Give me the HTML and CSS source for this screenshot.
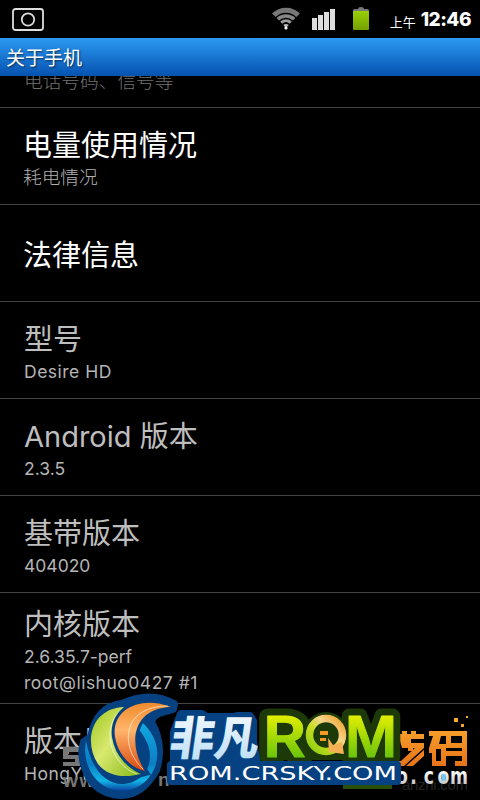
FILE: index.html
```html
<!DOCTYPE html>
<html lang="zh-CN">

<head>
    <meta charset="utf-8">
    <meta name="viewport" content="width=device-width, initial-scale=1">
    <title>关于手机</title>
    <link rel="stylesheet" href="styles.css">
</head>

<body>
    <div class="phone">
        <div class="statusbar">
            <svg class="camera" width="32" height="24" viewBox="0 0 32 24">
                <rect x="1" y="1" width="30" height="21" rx="2.5" />
                <circle cx="16" cy="11.5" r="6.2" />
            </svg>
            <div class="right">
                <svg class="wifi" width="30" height="24" viewBox="0 0 30 24">
                    <path d="M2.8 8.2a17.5 17.5 0 0 1 24.4 0" stroke="#777" stroke-width="5" />
                    <path d="M6.8 12.2a12 12 0 0 1 16.4 0" stroke="#858585" stroke-width="3.6" />
                    <path d="M10.2 15.6a7.2 7.2 0 0 1 9.6 0" stroke="#999" stroke-width="3" />
                    <path d="M12.2 18q2.8-2 5.6 0l-2.8 3z" fill="#bbb" />
                    <circle cx="15" cy="21" r="1.6" fill="#fff" />
                </svg>
                <svg class="signal" width="24" height="22" viewBox="0 0 24 22">
                    <path d="M0 10h5v12H0zM6 7h5v15H6zM12 4h5v18h-5zM18 1h5v21h-5z" />
                </svg>
                <svg class="battery" width="16" height="24" viewBox="0 0 16 24">
                    <path d="M0 5V3.500q0-1.500 1.500-1.500H5q0-2 3-2t3 2h3.500q1.500 0 1.500 1.500V5z" fill="#777" />
                    <rect y="4" width="16" height="19" rx="1" fill="url(#bat)" />
                    <defs>
                        <linearGradient id="bat" x1="0" y1="0" x2="0" y2="1">
                            <stop offset="0" stop-color="#99d006" />
                            <stop offset="1" stop-color="#74a000" />
                        </linearGradient>
                    </defs>
                </svg>
                <span class="ampm">上午</span>
                <span class="clock">12:46</span>
            </div>
        </div>
        <div class="titlebar">关于手机</div>

        <div class="list">
            <div class="row cut">
                <p class="sub">电话号码、信号等</p>
            </div>
            <div class="row active">
                <p class="name">电量使用情况</p>
                <p class="sub">耗电情况</p>
            </div>
            <div class="row active">
                <p class="name">法律信息</p>
            </div>
            <div class="row">
                <p class="name">型号</p>
                <p class="sub latin wide">Desire HD</p>
            </div>
            <div class="row">
                <p class="name">Android 版本</p>
                <p class="sub latin">2.3.5</p>
            </div>
            <div class="row">
                <p class="name">基带版本</p>
                <p class="sub latin">404020</p>
            </div>
            <div class="row kernel">
                <p class="name">内核版本</p>
                <p class="sub latin">2.6.35.7-perf</p>
                <p class="sub latin wide">root@lishuo0427 #1</p>
            </div>
            <div class="row last">
                <p class="name">版本号</p>
                <p class="sub latin wide">HongYi</p>
            </div>
        </div>

        <svg class="marks" width="480" height="120" viewBox="0 680 480 120">
            <defs>
                <linearGradient id="green" x1="0" y1="0" x2="1" y2="1">
                    <stop offset="0" stop-color="#9cc51c" />
                    <stop offset=".45" stop-color="#d9e96f" />
                    <stop offset="1" stop-color="#83b817" />
                </linearGradient>
                <linearGradient id="orange" x1="0" y1="0" x2="0" y2="1">
                    <stop offset="0" stop-color="#f08a2c" />
                    <stop offset=".4" stop-color="#ffb56b" />
                    <stop offset="1" stop-color="#d9480c" />
                </linearGradient>
                <linearGradient id="cyan" x1="0" y1="0" x2="0" y2="1">
                    <stop offset="0" stop-color="#12a8e0" />
                    <stop offset=".6" stop-color="#0b7fc4" />
                    <stop offset=".85" stop-color="#12b5e6" />
                    <stop offset="1" stop-color="#0a3f9c" />
                </linearGradient>
                <linearGradient id="ice" x1="0" y1="0" x2="0" y2="1">
                    <stop offset="0" stop-color="#ffffff" />
                    <stop offset="1" stop-color="#b5dbf5" />
                </linearGradient>
                <linearGradient id="lime" gradientUnits="userSpaceOnUse" x1="0" y1="714" x2="0" y2="758">
                    <stop offset="0" stop-color="#e6f000" />
                    <stop offset="1" stop-color="#68c40c" />
                </linearGradient>
                <linearGradient id="gold" x1="0" y1="1" x2="1" y2="0">
                    <stop offset="0" stop-color="#86cc10" />
                    <stop offset=".4" stop-color="#c9de20" />
                    <stop offset=".65" stop-color="#f5d58a" />
                    <stop offset="1" stop-color="#f0a02c" />
                </linearGradient>
                <linearGradient id="amber" gradientUnits="userSpaceOnUse" x1="0" y1="716" x2="0" y2="766">
                    <stop offset="0" stop-color="#fcb030" />
                    <stop offset="1" stop-color="#e8731a" />
                </linearGradient>
                <linearGradient id="silver" x1="0" y1="0" x2="0" y2="1">
                    <stop offset="0.3" stop-color="#ffffff" />
                    <stop offset="1" stop-color="#b0b0b0" />
                </linearGradient>
            </defs>

            <!-- grey site stamp behind -->
            <g class="stamp">
                <path d="M63 747h17v5H68v3h12v11H63v-4h12v-3H63zM140 747h6l2 2v6l-2 2h-6zM172 756h3v3h-3zM230 757l4 5h-4z" />
                <text x="63" y="787" font-size="19" textLength="48">www</text>
                <text x="158" y="786" font-size="19">n</text>
            </g>

            <!-- anzhi -->
            <text class="ghost" x="402" y="790" font-size="15" textLength="66">anzhi.com</text>
            <g fill="url(#amber)">
                <path d="M454 718h4v4h-4zM461 724h3v3h-3zM466 716h2v2h-2z" />
                <path d="M398 734h4v-3h5v3h4v-3h5v3h8v5h-13v4h13v5l-20 18h-8v-5h5l14-13h-2v3h-5v-3h-6zM424 750v6l-11 10h-7z" />
                <path d="M429 731h38v35h-12v-5h7v-5h-16v-5h16v-3h-16v-12h-5l-2 8h7v22h-14v-13h-3v-5l4-12h-4zM436 749v12h5v-12zM451 736v7h11v-7z" fill-rule="evenodd" />
            </g>
            <text class="com" x="528 547 565 583.500 600" y="784" font-size="23" transform="scale(.75 1)">o.com</text>
            <path d="M441.500 774h4v7h-4z" fill="#77c8f2" />
            <path d="M343 780h49v9h-49z" fill="#28500b" />

            <!-- crsky, dark outlines first -->
            <text class="rom back" x="263" y="757" font-size="57" textLength="43" lengthAdjust="spacingAndGlyphs">R</text>
            <text class="rom back" x="345" y="757" font-size="57" textLength="52" lengthAdjust="spacingAndGlyphs">M</text>
            <circle cx="326" cy="735" r="23" fill="#1d3907" />
            <path d="M275 745h113v15H275z" fill="#1d3907" />
            <path d="M320 731h8v4h-8zM320 738h6v3h-6z" fill="#f79a25" />
            <path class="navy" d="M181 714h21l4 3h28l4-1h12l3 5v20l3 18h-82v-27z" />
            <rect class="navy" x="171" y="765" width="226" height="16" />
            <path class="navy" d="M122 704Q150 691 174 704L173 709L159 713Q152 716 151 722Q164 745 156 770Q142 795 121 795Q99 794 89 777Q79 758 84 742L91 737Q97 707 122 704z" />
            <path d="M86 741C81 768 99 791 122 791C151 791 173 752 143 723C140 723 139 727 140 731C162 759 144 784 122 784C105 784 91 768 86 741z" fill="url(#cyan)" />
            <path class="leaf" d="M124 707C92 708 83 741 98 764C108 777 125 778 141 774C118 764 102 733 124 707z" fill="url(#green)" />
            <path class="vein" d="M122 709C100 727 110 765 137 774" />
            <path class="leaf" d="M171 707C141 695 111 709 115 737C118 755 131 768 145 771C127 743 133 708 171 707z" fill="url(#orange)" />
            <path class="vein" d="M168 706C121 706 120 748 143 769" />
            <text class="feifan" x="0" y="0" font-size="46" transform="translate(168 755) skewX(-8)" textLength="89" lengthAdjust="spacingAndGlyphs">非凡</text>
            <text class="rom" x="263" y="757" font-size="57" textLength="43" lengthAdjust="spacingAndGlyphs">R</text>
            <circle cx="326" cy="735" r="16.500" class="ring" />
            <path d="M328 738l5 7 9-3 2 12-15-2z" fill="#f3b154" />
            <text class="rom" x="345" y="757" font-size="57" textLength="52" lengthAdjust="spacingAndGlyphs">M</text>
            <text class="url" x="169" y="780" font-size="19.5" textLength="228" lengthAdjust="spacingAndGlyphs">ROM.CRSKY.COM</text>
        </svg>
    </div>
</body>

</html>
```

FILE: styles.css
```css
body {
    margin: 0;
    background: #000;
}

.phone {
    position: relative;
    width: 480px;
    height: 800px;
    overflow: hidden;
    display: flex;
    flex-direction: column;
    background: #000;
    font-family: Inter, "Noto Sans CJK SC", sans-serif;
}

.statusbar {
    height: 38px;
    flex: none;
    display: flex;
    justify-content: space-between;
    padding: 0 9px 0 12px;
    color: #fff;
}

.camera {
    margin-top: 8px;
    fill: none;
    stroke: #ddd;
    stroke-width: 1.8;
}

.right {
    display: flex;
    align-items: flex-start;
}

.wifi {
    margin: 7px 11px 0 0;
    fill: none;
}

.signal {
    margin: 8px 17px 0 0;
    fill: #ddd;
}

.battery {
    margin: 7px 21px 0 0;
}

.ampm {
    font-size: 13px;
    line-height: 20px;
    margin: 12px 5px 0 0;
}

.clock {
    font-size: 19px;
    line-height: 20px;
    font-weight: 800;
    letter-spacing: -0.5px;
    margin-top: 10px;
}

.titlebar {
    height: 38px;
    flex: none;
    box-sizing: border-box;
    padding-left: 6px;
    font-size: 19px;
    line-height: 42px;
    color: #fff;
    text-shadow: 1px 1px 2px rgba(0, 0, 0, 0.6);
    background: linear-gradient(#2c9af2, #0552b0);
}

.list {
    flex: 1;
    overflow: hidden;
    color: #bebebe;
}

.row {
    height: 97px;
    box-sizing: border-box;
    padding: 6px 0 0 24px;
    border-bottom: 1px solid #444;
    display: flex;
    flex-direction: column;
    justify-content: center;
}

.row p {
    margin: 0;
    white-space: nowrap;
}

.name {
    font-size: 29px;
    line-height: 38px;
}

.sub {
    font-size: 18.7px;
    line-height: 26px;
    color: #b0b0b0;
    font-weight: 300;
}

.latin {
    font-size: 17.5px;
    font-weight: 400;
    color: #b5b5b5;
}

.wide {
    letter-spacing: 0.5px;
}

.active {
    padding-left: 23px;
}

.active .name {
    color: #fff;
}

.cut {
    height: 32px;
    justify-content: flex-end;
    padding: 0 0 12px 24px;
}

.cut .sub {
    color: #707070;
}

.kernel {
    height: 111px;
}

.last {
    height: 110px;
    border-bottom: none;
    justify-content: flex-start;
    padding-top: 19px;
}

.marks {
    position: absolute;
    left: 0;
    top: 680px;
}

.stamp {
    fill: #777;
    font-family: "Liberation Sans", sans-serif;
    font-weight: 700;
}

.ghost {
    fill: #222;
    font-family: "Liberation Sans", sans-serif;
}

.com {
    fill: url(#silver);
    font-family: "DejaVu Sans", sans-serif;
    font-weight: 700;
}

.navy {
    fill: #064181;
    stroke: #064181;
    stroke-width: 8;
    stroke-linejoin: round;
}

.leaf {
    stroke: #064181;
    stroke-width: 6;
    paint-order: stroke;
}

.vein {
    fill: none;
    stroke: #fff;
    stroke-width: 1;
    opacity: 0.6;
}

.feifan {
    fill: url(#ice);
    font-family: "Noto Sans CJK SC", sans-serif;
    font-weight: 900;
}

.rom {
    fill: url(#lime);
    stroke: url(#lime);
    stroke-width: 1;
    stroke-linejoin: round;
    font-family: Inter, sans-serif;
    font-weight: 600;
}

.back {
    fill: #1d3907;
    stroke: #1d3907;
    stroke-width: 15;
}

.ring {
    fill: none;
    stroke: url(#gold);
    stroke-width: 7.5;
}

.url {
    fill: #fff;
    font-family: "DejaVu Sans", sans-serif;
}
```
